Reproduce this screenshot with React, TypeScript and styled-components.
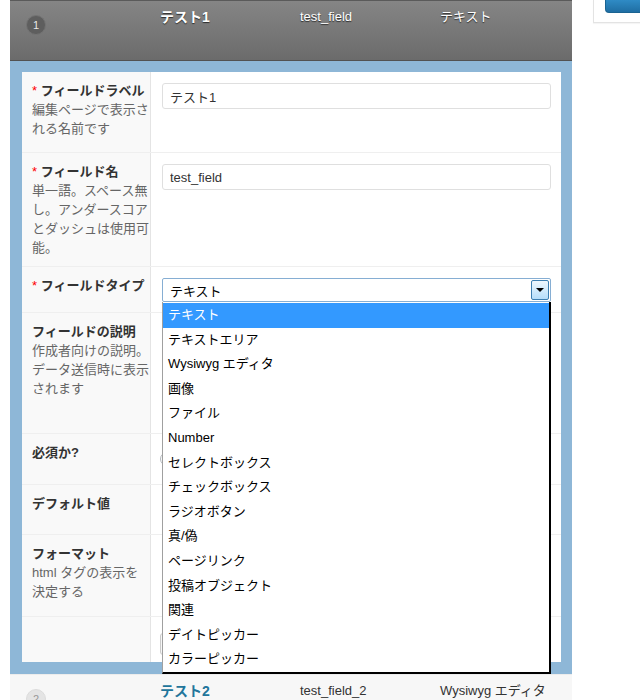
import styled, { createGlobalStyle } from "styled-components";

const GlobalStyle = createGlobalStyle`
  html, body {
    margin: 0;
    padding: 0;
    background: #fff;
    overflow: hidden;
  }
  body {
    font-family: "Liberation Sans", "Noto Sans CJK JP", sans-serif;
    font-size: 13px;
    color: #333;
  }
  * {
    box-sizing: border-box;
  }
`;

const Page = styled.div`
  display: flex;
  align-items: flex-start;
  width: 640px;
  height: 700px;
  padding-left: 10px;
  overflow: hidden;
`;

const Main = styled.div`
  width: 562px;
  flex-shrink: 0;
`;

const Sidebar = styled.div`
  margin-left: 21px;
  width: 70px;
  flex-shrink: 0;
  height: 23px;
  padding-left: 11px;
  background: #fff;
  border: 1px solid #e3e3e3;
  border-top: none;
  box-shadow: 0 1px 1px rgba(0, 0, 0, 0.04);
`;

const PublishButton = styled.div`
  height: 13px;
  background: linear-gradient(#2f8bc5, #1f6ea3);
  border: 1px solid #1a6391;
  border-top: none;
  border-radius: 0 0 0 4px;
`;

const FieldHead = styled.div<{ $open?: boolean }>`
  display: grid;
  grid-template-columns: 140px 140px 140px 1fr;
  height: ${p => (p.$open ? "61px" : "40px")};
  background: ${p => (p.$open ? "linear-gradient(#858585, #6b6b6b)" : "#f7f7f7")};
  border-top: 1px solid ${p => (p.$open ? "#5a5a5a" : "#ececec")};
  border-bottom: 1px solid ${p => (p.$open ? "#525252" : "#ececec")};
`;

const OrderCell = styled.div`
  padding: 14px 0 0 16px;
`;

const OrderBadge = styled.span<{ $open?: boolean }>`
  display: flex;
  align-items: center;
  justify-content: center;
  width: 20px;
  height: 20px;
  border-radius: 50%;
  font-size: 11px;
  background: ${p => (p.$open ? "#5e5e5e" : "#e4e4e4")};
  border: 1px solid ${p => (p.$open ? "#737373" : "#dcdcdc")};
  color: ${p => (p.$open ? "#e8e8e8" : "#999")};
`;

const HeadCell = styled.div<{ $open?: boolean; $title?: boolean }>`
  padding: 7px 10px 0;
  line-height: 18px;
  font-size: ${p => (p.$title ? "14px" : "13px")};
  font-weight: ${p => (p.$title ? "bold" : "normal")};
  color: ${p => (p.$open ? "#fff" : p.$title ? "#21759b" : "#333")};
  text-shadow: ${p => (p.$open ? "0 1px 1px rgba(0,0,0,0.65)" : "none")};
  white-space: nowrap;
`;

const Editor = styled.div`
  background: #8eb7d7;
  padding: 11px 11px 12px 12px;
`;

const Panel = styled.div`
  background: #fff;
`;

const Row = styled.div<{ $h: number }>`
  display: flex;
  min-height: ${p => p.$h}px;
  border-bottom: 1px solid #efefef;
  &:last-child {
    border-bottom: none;
  }
`;

const LabelCell = styled.div`
  width: 129px;
  flex-shrink: 0;
  padding: 9px 0 0 10px;
  background: #f9f9f9;
  border-right: 1px solid #e4e4e4;
`;

const LabelText = styled.div`
  font-weight: bold;
  line-height: 19px;
  color: #333;
`;

const Required = styled.span`
  color: #f00;
  font-weight: normal;
`;

const Desc = styled.div`
  line-height: 19px;
  color: #666;
`;

const InputCell = styled.div`
  flex: 1;
  padding: 11px 10px 0 11px;
`;

const TextInput = styled.input`
  display: block;
  width: 100%;
  height: 26px;
  margin: 0;
  padding: 0 7px;
  border: 1px solid #dfdfdf;
  border-radius: 3px;
  font: inherit;
  color: #333;
  background: #fff;
  outline: none;
`;

const TextArea = styled.div`
  height: 100px;
  border: 1px solid #dfdfdf;
  border-radius: 3px;
`;

const Radio = styled.span`
  display: inline-block;
  width: 14px;
  height: 14px;
  margin: 7px 0 0 -2px;
  border: 1px solid #b4b9be;
  border-radius: 50%;
  background: #fff;
`;

const GhostButton = styled.div`
  width: 120px;
  height: 22px;
  margin: 5px 0 0 -2px;
  border: 1px solid #ccc;
  border-radius: 3px;
  background: #f7f7f7;
`;

const SelectBox = styled.div`
  position: relative;
  display: flex;
  align-items: center;
  height: 24px;
  padding-left: 7px;
  border: 1px solid #86aed3;
  border-radius: 2px;
  color: #000;
  background: #fff;
`;

const SelectArrow = styled.span`
  position: absolute;
  top: 1px;
  right: 1px;
  display: flex;
  align-items: center;
  justify-content: center;
  width: 18px;
  height: 20px;
  border: 1px solid #3c7fb1;
  border-radius: 2px;
  background: linear-gradient(#eef8fe, #b5defa);
  &::after {
    content: "";
    border-left: 4px solid transparent;
    border-right: 4px solid transparent;
    border-top: 4px solid #000;
  }
`;

const Dropdown = styled.ul`
  position: absolute;
  top: calc(100% + 1px);
  left: -1px;
  right: -1px;
  z-index: 5;
  margin: 0;
  padding: 1px 0 0;
  list-style: none;
  background: #fff;
  border: 2px solid #000;
  border-top: none;
  border-left: 1px solid #a0a0a0;
`;

const Option = styled.li<{ $active?: boolean }>`
  height: 24.6px;
  line-height: 24.6px;
  padding-left: 5px;
  white-space: nowrap;
  color: ${p => (p.$active ? "#fff" : "#000")};
  background: ${p => (p.$active ? "#3399ff" : "transparent")};
`;

const types = [
  "テキスト",
  "テキストエリア",
  "Wysiwyg エディタ",
  "画像",
  "ファイル",
  "Number",
  "セレクトボックス",
  "チェックボックス",
  "ラジオボタン",
  "真/偽",
  "ページリンク",
  "投稿オブジェクト",
  "関連",
  "デイトピッカー",
  "カラーピッカー",
];

const Label = ({ text, required }: { text: string; required?: boolean }) => (
  <LabelText>
    {required && <Required>* </Required>}
    {text}
  </LabelText>
);

export default function App() {
  return (
    <>
      <GlobalStyle />
      <Page>
        <Main>
          <FieldHead $open>
            <OrderCell>
              <OrderBadge $open>1</OrderBadge>
            </OrderCell>
            <HeadCell $open $title>テスト1</HeadCell>
            <HeadCell $open>test_field</HeadCell>
            <HeadCell $open>テキスト</HeadCell>
          </FieldHead>

          <Editor>
            <Panel>
              <Row $h={81}>
                <LabelCell>
                  <Label text="フィールドラベル" required />
                  <Desc>編集ページで表示される名前です</Desc>
                </LabelCell>
                <InputCell>
                  <TextInput readOnly value="テスト1" />
                </InputCell>
              </Row>
              <Row $h={114}>
                <LabelCell>
                  <Label text="フィールド名" required />
                  <Desc>単一語。スペース無し。アンダースコアとダッシュは使用可能。</Desc>
                </LabelCell>
                <InputCell>
                  <TextInput readOnly value="test_field" />
                </InputCell>
              </Row>
              <Row $h={46}>
                <LabelCell>
                  <Label text="フィールドタイプ" required />
                </LabelCell>
                <InputCell>
                  <SelectBox>
                    テキスト
                    <SelectArrow />
                    <Dropdown>
                      {types.map((t, i) => (
                        <Option key={t} $active={i === 0}>
                          {t}
                        </Option>
                      ))}
                    </Dropdown>
                  </SelectBox>
                </InputCell>
              </Row>
              <Row $h={121}>
                <LabelCell>
                  <Label text="フィールドの説明" />
                  <Desc>作成者向けの説明。データ送信時に表示されます</Desc>
                </LabelCell>
                <InputCell>
                  <TextArea />
                </InputCell>
              </Row>
              <Row $h={51}>
                <LabelCell>
                  <Label text="必須か?" />
                </LabelCell>
                <InputCell>
                  <Radio />
                </InputCell>
              </Row>
              <Row $h={50}>
                <LabelCell>
                  <Label text="デフォルト値" />
                </LabelCell>
                <InputCell>
                  <TextInput readOnly value="" />
                </InputCell>
              </Row>
              <Row $h={82}>
                <LabelCell>
                  <Label text="フォーマット" />
                  <Desc>html タグの表示を決定する</Desc>
                </LabelCell>
                <InputCell />
              </Row>
              <Row $h={45}>
                <LabelCell />
                <InputCell>
                  <GhostButton />
                </InputCell>
              </Row>
            </Panel>
          </Editor>

          <FieldHead>
            <OrderCell>
              <OrderBadge>2</OrderBadge>
            </OrderCell>
            <HeadCell $title>テスト2</HeadCell>
            <HeadCell>test_field_2</HeadCell>
            <HeadCell>Wysiwyg エディタ</HeadCell>
          </FieldHead>
        </Main>
        <Sidebar>
          <PublishButton />
        </Sidebar>
      </Page>
    </>
  );
}
